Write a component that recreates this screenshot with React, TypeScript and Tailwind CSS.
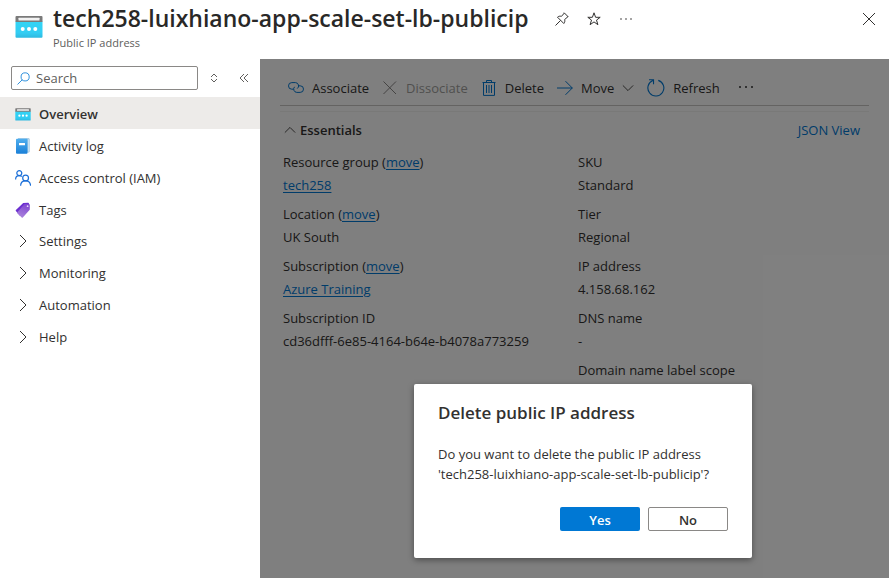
import type { ReactNode } from "react";

function PublicIpIcon({ className }: { className: string }) {
  return (
    <svg viewBox="0 0 28 22" className={className} aria-hidden="true">
      <defs>
        <linearGradient id="ipBody" x1="0" y1="0" x2="0" y2="1">
          <stop offset="0" stopColor="#32d4f5" />
          <stop offset="0.7" stopColor="#32cdf3" />
          <stop offset="1" stopColor="#2fb9e0" />
        </linearGradient>
      </defs>
      <path d="M0.5 5.5h27v15.2a1 1 0 0 1-1 1h-25a1 1 0 0 1-1-1z" fill="url(#ipBody)" />
      <path d="M1.5 0h25a1 1 0 0 1 1 1v5h-27V1a1 1 0 0 1 1-1z" fill="#7a7a7a" />
      <rect x="3.5" y="1.8" width="21" height="2.8" rx="0.4" fill="#f2f2f2" />
      <circle cx="7.7" cy="13" r="2" fill="#fff" />
      <circle cx="14" cy="13" r="2" fill="#fff" />
      <circle cx="20.3" cy="13" r="2" fill="#fff" />
    </svg>
  );
}

function ActivityLogIcon() {
  return (
    <svg viewBox="0 0 16 16" className="size-4" aria-hidden="true">
      <defs>
        <linearGradient id="logCover" x1="0" y1="0" x2="0" y2="1">
          <stop offset="0" stopColor="#50aeee" />
          <stop offset="1" stopColor="#1a80d8" />
        </linearGradient>
      </defs>
      <path d="M3 0.300h10.600a1 1 0 0 1 1 1v12.200a1 1 0 0 1-1 1H3z" fill="#8fbfe0" />
      <path d="M12.500 1.200h1.400v12.600h-1.400z" fill="#cfe3f0" />
      <path d="M2 0.800h9.600a.9.9 0 0 1 .9.900v13.100a.9.9 0 0 1-.9.900H2a1 1 0 0 1-1-1V1.800a1 1 0 0 1 1-1z" fill="url(#logCover)" />
      <rect x="4" y="5" width="6" height="2.200" rx="0.300" fill="#fff" />
    </svg>
  );
}

function AccessIcon() {
  return (
    <svg viewBox="0 0 16 16" className="size-4" fill="none" stroke="#1b6fd8" strokeWidth="1.2" aria-hidden="true">
      <circle cx="4.3" cy="3.1" r="2.5" />
      <path d="M0.6 9.4c0-2.3 1.5-3.8 3.7-3.8 1 0 1.800.3 2.500.9" />
      <circle cx="10.600" cy="8" r="2.900" />
      <path d="M5.600 15.800c.1-3 2.100-4.900 5-4.900s4.800 1.900 5 4.900" />
    </svg>
  );
}

function TagIcon() {
  return (
    <svg viewBox="0 0 16 16" className="size-4" aria-hidden="true">
      <defs>
        <linearGradient id="tagFill" x1="0.7" y1="0" x2="0.4" y2="1">
          <stop offset="0" stopColor="#8045d0" />
          <stop offset="1" stopColor="#a983dc" />
        </linearGradient>
      </defs>
      <path d="M8.200 0.900 13 .8a1 1 0 0 1 1 1l-.2 4.800L6 13.800a.8.8 0 0 1-1.100 0L.9 9a.8.8 0 0 1 0-1.100z" fill="#6c30d0" />
      <path d="M9.600 2h4.200a1 1 0 0 1 1 1v4.200a1.200 1.200 0 0 1-.3.800l-6.700 7.400a.8.8 0 0 1-1.100 0L2.300 11.300a.8.8 0 0 1 0-1.100z" fill="url(#tagFill)" />
      <circle cx="12.600" cy="4.200" r="0.900" fill="#e6d8fa" />
    </svg>
  );
}

function ChevronIcon({ d, className }: { d: string; className: string }) {
  return (
    <svg viewBox="0 0 14 14" className={className} fill="none" stroke="currentColor" strokeWidth="1" aria-hidden="true">
      <path d={d} />
    </svg>
  );
}

const chevronRight = "M4 1 10 7 4 13";
const chevronDown = "M1 4 7 10 13 4";
const chevronUp = "M1 10 7 4 13 10";

function LineIcon({ children, className = "size-4 text-[#0078d4]" }: { children: ReactNode; className?: string }) {
  return (
    <svg viewBox="0 0 16 16" className={className} fill="none" stroke="currentColor" strokeWidth="1" aria-hidden="true">
      {children}
    </svg>
  );
}

function Header() {
  return (
    <header className="flex h-[59px] items-start pl-[15px] pr-3">
      <PublicIpIcon className="mt-4 h-[22px] w-7 shrink-0" />
      <div className="ml-[10px] min-w-0">
        <h1 className="pt-[3px] text-[23px] leading-[30px] font-semibold whitespace-nowrap text-[#292827]">
          tech258-luixhiano-app-scale-set-lb-publicip
        </h1>
        <p className="text-[11px] leading-5 text-[#605e5c]">Public IP address</p>
      </div>
      <div className="ml-[26px] flex gap-4 pt-[11px] text-[#323130]">
        <button type="button" aria-label="Pin" className="size-4">
          <LineIcon className="size-4">
            <path d="M10 1.600 14.400 6M10.400 2 7.400 5.400C5.900 4.900 4.500 5.200 3.500 6.200L9.800 12.500C10.800 11.500 11.100 10.100 10.600 8.600L14 5.600M6.600 9.400 1.500 14.500" />
          </LineIcon>
        </button>
        <button type="button" aria-label="Favorite" className="size-4">
          <LineIcon className="size-4">
            <path d="M8 1.800 9.600 6.300H14.200L10.500 9.100 11.900 13.700 8 10.900 4.100 13.700 5.500 9.100 1.800 6.300H6.400z" />
          </LineIcon>
        </button>
        <button type="button" aria-label="More actions" className="size-4">
          <svg viewBox="0 0 16 16" className="size-4" fill="currentColor" aria-hidden="true">
            <circle cx="3" cy="8" r="0.800" />
            <circle cx="8" cy="8" r="0.800" />
            <circle cx="13" cy="8" r="0.800" />
          </svg>
        </button>
      </div>
      <button type="button" aria-label="Close" className="mt-[11px] ml-auto size-4 text-[#323130]">
        <LineIcon className="size-4">
          <path d="M2 2 14 14M14 2 2 14" />
        </LineIcon>
      </button>
    </header>
  );
}

const pages = [
  { label: "Overview", icon: <PublicIpIcon className="h-[13px] w-4" />, active: true },
  { label: "Activity log", icon: <ActivityLogIcon />, active: false },
  { label: "Access control (IAM)", icon: <AccessIcon />, active: false },
  { label: "Tags", icon: <TagIcon />, active: false },
];

const groups = ["Settings", "Monitoring", "Automation", "Help"];

function Sidebar() {
  return (
    <aside className="w-[260px] shrink-0 bg-white">
      <div className="flex h-[38px] items-center pl-[11px]">
        <label className="flex h-6 w-[187px] items-center gap-[6px] rounded-[2px] border border-[#8a8886] pl-[5px]">
          <LineIcon className="size-[13px] shrink-0 text-[#0078d4]">
            <circle cx="10" cy="6" r="5" />
            <path d="M6.400 9.600.6 15.400" />
          </LineIcon>
          <input
            type="search"
            aria-label="Search menu"
            placeholder="Search"
            className="w-full min-w-0 bg-transparent outline-none placeholder:text-[#605e5c]"
          />
        </label>
        <button type="button" aria-label="Expand all" className="ml-[10px] size-3 text-[#605e5c]">
          <svg viewBox="0 0 12 12" className="size-3" fill="none" stroke="currentColor" aria-hidden="true">
            <path d="M3 5 6 2 9 5M3 7 6 10 9 7" />
          </svg>
        </button>
        <button type="button" aria-label="Collapse menu" className="ml-[18px] size-3 text-[#605e5c]">
          <svg viewBox="0 0 12 12" className="size-3" fill="none" stroke="currentColor" aria-hidden="true">
            <path d="M6 2 2 6 6 10M10 2 6 6 10 10" />
          </svg>
        </button>
      </div>
      <nav>
        {pages.map((page) => (
          <a
            key={page.label}
            href="#"
            className={
              page.active
                ? "flex h-8 items-center gap-2 bg-[#edebe9] pt-[2px] pl-[15px] font-semibold"
                : "flex h-8 items-center gap-2 pt-[2px] pl-[15px]"
            }
          >
            {page.icon}
            {page.label}
          </a>
        ))}
        {groups.map((group) => (
          <button key={group} type="button" className="flex h-8 w-full items-center gap-2 pl-[15px]">
            <span className="flex w-4 justify-center">
              <ChevronIcon d={chevronRight} className="size-[14px]" />
            </span>
            {group}
          </button>
        ))}
      </nav>
    </aside>
  );
}

function Toolbar() {
  const item = "flex items-center gap-2 whitespace-nowrap";
  return (
    <div className="flex h-[47px] items-center gap-[13px] border-b border-[#c8c6c4] pt-3 pl-2">
      <button type="button" className={item}>
        <LineIcon>
          <path d="M5.500 9.200H3.800A3.300 3.300 0 0 1 3.800 2.600H7.400A3.300 3.300 0 0 1 9.200 8.600M10.500 5.800H12.200A3.300 3.300 0 0 1 12.200 12.400H8.800A3.300 3.300 0 0 1 6.600 6.800" />
        </LineIcon>
        Associate
      </button>
      <button type="button" disabled className={`${item} text-[#a19f9d]`}>
        <LineIcon className="size-4 text-[#8a8886]">
          <path d="M1.500 1.500 14 14M14 1.500 1.500 14" />
        </LineIcon>
        Dissociate
      </button>
      <button type="button" className={item}>
        <LineIcon>
          <path d="M1.500 2.500H14.500M5.500 2.500V.5H10.500V2.500M2.500 2.500V15.400H13.500V2.500M5.500 5V13M8 5V13M10.500 5V13" />
        </LineIcon>
        Delete
      </button>
      <button type="button" className={item}>
        <LineIcon>
          <path d="M0 8H15.400M8.500 1.200 15.300 8 8.500 14.800" />
        </LineIcon>
        Move
        <ChevronIcon d={chevronDown} className="size-3" />
      </button>
      <button type="button" className={item}>
        <LineIcon className="size-[18px] text-[#0078d4]">
          <path d="M10 1.200A7.100 7.100 0 1 1 5.200 1.400M1.800.7H5.800V4.700" />
        </LineIcon>
        Refresh
      </button>
      <button type="button" aria-label="More commands" className="ml-[5px] size-4">
        <svg viewBox="0 0 16 16" className="size-4" fill="currentColor" aria-hidden="true">
          <circle cx="2" cy="7" r="1" />
          <circle cx="8" cy="7" r="1" />
          <circle cx="14" cy="7" r="1" />
        </svg>
      </button>
    </div>
  );
}

type Property = { label: string; value: string; movable?: boolean; linked?: boolean };

const leftProperties: Property[] = [
  { label: "Resource group", value: "tech258", movable: true, linked: true },
  { label: "Location", value: "UK South", movable: true },
  { label: "Subscription", value: "Azure Training", movable: true, linked: true },
  { label: "Subscription ID", value: "cd36dfff-6e85-4164-b64e-b4078a773259" },
];

const rightProperties: Property[] = [
  { label: "SKU", value: "Standard" },
  { label: "Tier", value: "Regional" },
  { label: "IP address", value: "4.158.68.162" },
  { label: "DNS name", value: "-" },
  { label: "Domain name label scope", value: "" },
];

function PropertyList({ items }: { items: Property[] }) {
  const link = "text-[#0078d4] underline underline-offset-2";
  return (
    <dl className="min-w-0">
      {items.map((property) => (
        <div key={property.label} className="h-[52px] leading-[23px] whitespace-nowrap">
          <dt>
            {property.label}
            {property.movable && (
              <>
                {" "}
                (<a href="#" className={link}>move</a>)
              </>
            )}
          </dt>
          <dd>
            {property.linked ? <a href="#" className={link}>{property.value}</a> : property.value}
          </dd>
        </div>
      ))}
    </dl>
  );
}

function DeleteDialog() {
  return (
    <div className="absolute inset-0 flex items-end justify-end bg-black/50 pr-[137px] pb-5">
      <div
        role="dialog"
        aria-labelledby="dialog-title"
        className="w-[338px] rounded-[2px] bg-white px-6 pt-[17px] pb-[27px] shadow-[0_2px_6px_rgba(0,0,0,0.4)]"
      >
        <h2 id="dialog-title" className="text-[17px] leading-6 font-semibold">
          Delete public IP address
        </h2>
        <p className="pt-[19px] leading-5 whitespace-nowrap">
          Do you want to delete the public IP address
          <br />
          'tech258-luixhiano-app-scale-set-lb-publicip'?
        </p>
        <div className="flex justify-end gap-2 pt-[23px]">
          <button type="button" className="h-6 w-20 rounded-[2px] bg-[#0078d4] pt-px font-semibold text-white">
            Yes
          </button>
          <button type="button" className="h-6 w-20 rounded-[2px] border border-[#8a8886] bg-white pt-px font-semibold">
            No
          </button>
        </div>
      </div>
    </div>
  );
}

export default function App() {
  return (
    <div className="flex min-h-screen flex-col bg-white font-['Open_Sans','Noto_Sans',sans-serif] text-[13px] leading-5 text-[#323130]">
      <Header />
      <div className="flex flex-1">
        <Sidebar />
        <main className="relative min-w-0 flex-1 overflow-hidden px-5">
          <Toolbar />
          <div className="mt-[5px] mb-1 flex h-9 items-center border-t border-[#f3f2f1] pr-[9px] pl-1">
            <button type="button" className="flex items-center gap-1 font-semibold">
              <ChevronIcon d={chevronUp} className="size-3" />
              Essentials
            </button>
            <a href="#" className="ml-auto text-[#0078d4]">JSON View</a>
          </div>
          <div className="grid grid-cols-2 gap-x-1 pl-[3px]">
            <PropertyList items={leftProperties} />
            <PropertyList items={rightProperties} />
          </div>
          <DeleteDialog />
        </main>
      </div>
    </div>
  );
}
